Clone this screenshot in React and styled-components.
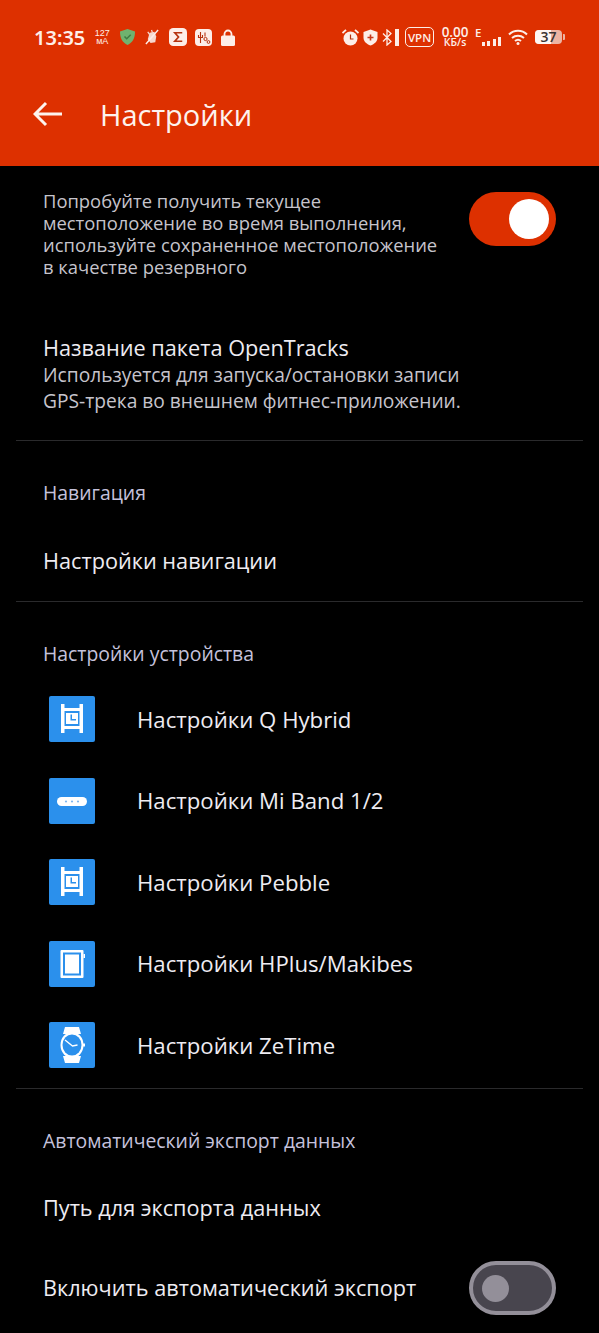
import React from 'react'
import styled, { createGlobalStyle } from 'styled-components'

const GlobalStyle = createGlobalStyle`
  html, body {
    margin: 0;
    padding: 0;
    background: #000;
    font-family: "Open Sans", "Noto Sans", sans-serif;
  }
`

const Page = styled.div`
  width: 599px;
  height: 1333px;
  overflow: hidden;
  background: #000;
`

const Header = styled.header`
  height: 166px;
  background: #dd3000;
  color: #fff;
  display: flex;
  flex-direction: column;
`

const StatusBar = styled.div`
  height: 24px;
  margin-top: 25px;
  padding: 0 34px;
  display: flex;
  align-items: center;
  justify-content: space-between;
  color: #fdeee8;
`

const StatusGroup = styled.div`
  display: flex;
  align-items: center;
`

const Clock = styled.span`
  font-size: 20px;
  font-weight: 600;
  margin-right: 10px;
  font-family: "Noto Sans", sans-serif;
`

const Current = styled.span`
  display: flex;
  flex-direction: column;
  align-items: center;
  width: 14px;
  font-size: 9px;
  line-height: 8px;
  margin-right: 10px;
  font-family: "Liberation Sans", sans-serif;
`

const Vpn = styled.span`
  box-sizing: border-box;
  border: 1.5px solid #fdeee8;
  border-radius: 5px;
  width: 29px;
  height: 20px;
  display: flex;
  align-items: center;
  justify-content: center;
  font-size: 11.5px;
  font-weight: 600;
  margin: 0 6px;
`

const Speed = styled.span`
  display: flex;
  flex-direction: column;
  align-items: center;
  width: 30px;
  font-size: 13.5px;
  line-height: 10px;
  font-weight: 600;
  small {
    font-size: 10.5px;
    line-height: 10px;
  }
`

const NetType = styled.span`
  font-size: 11.5px;
  font-weight: 600;
  line-height: 12px;
  margin: 0 0 9px 5px;
`

const Signal = styled.div`
  display: flex;
  align-items: flex-end;
  gap: 2.5px;
  height: 10px;
  margin: 8px 7px 0 0;
`

const SignalBar = styled.i`
  display: block;
  width: 3px;
  height: ${(p) => p.$h}px;
  background: #fdeee8;
`

const Battery = styled.div`
  position: relative;
  width: 27px;
  height: 14px;
  margin-left: 7px;
  border-radius: 4px;
  background: #ecb4a3;
  display: flex;
  align-items: center;
  justify-content: center;
  font-size: 14px;
  line-height: 14px;
  font-weight: 600;
  color: #3a3230;
`

const BatteryFill = styled.i`
  position: absolute;
  left: 0;
  top: 0;
  bottom: 0;
  border-radius: 4px 0 0 4px;
  background: #fdf6f3;
`

const BatteryLabel = styled.span`
  position: relative;
`

const BatteryTip = styled.i`
  display: block;
  width: 2px;
  height: 6px;
  margin-left: 1px;
  background: #ecb4a3;
  border-radius: 0 1px 1px 0;
`

const TitleRow = styled.div`
  display: flex;
  align-items: center;
  margin-top: 46px;
  height: 38px;
  padding-left: 33px;
`

const Title = styled.h1`
  margin: 0 0 0 38px;
  font-size: 29px;
  font-weight: 400;
  color: #fdf3ee;
`

const Content = styled.main`
  padding: 0 16px;
`

const Section = styled.section`
  border-bottom: ${(p) => (p.$last ? 'none' : '1px solid #2a2a2c')};
  padding-bottom: ${(p) => p.$pb || 0}px;
`

const TopRow = styled.div`
  display: flex;
  align-items: flex-start;
  justify-content: space-between;
  padding: 24px 27px 0;
`

const ToggleRow = styled.div`
  display: flex;
  align-items: center;
  justify-content: space-between;
  margin-top: 40px;
  padding: 0 27px;
`

const Hint = styled.p`
  margin: 0;
  font-size: 18.4px;
  line-height: 22px;
  color: #c6c4cc;
  width: 400px;
`

const OpenTracks = styled.div`
  padding: 0 27px;
  margin-top: 56px;
`

const RowTitle = styled.div`
  font-size: 21.7px;
  line-height: 28px;
  color: #eeecf2;
`

const SubText = styled.p`
  margin: 0;
  font-size: 19.2px;
  line-height: 26px;
  color: #c6c4cc;
`

const Caption = styled.h2`
  margin: 0;
  padding: 40px 27px 0;
  font-size: 19.4px;
  line-height: 24px;
  font-weight: 400;
  color: #c5c2dc;
`

const PlainRow = styled.div`
  height: 28px;
  margin-top: ${(p) => p.$mt}px;
  padding: 0 27px;
  display: flex;
  align-items: center;
  font-size: 21.7px;
  color: #eeecf2;
`

const DeviceList = styled.div`
  display: flex;
  flex-direction: column;
  gap: 35.6px;
  margin-top: 30px;
`

const DeviceRow = styled.div`
  display: flex;
  align-items: center;
  height: 46px;
  padding-left: 33px;
  font-size: 22.2px;
  color: #eeecf2;
`

const DeviceIcon = styled.svg`
  width: 46px;
  height: 46px;
  margin-right: 42px;
  flex: none;
`

const Switch = styled.div`
  box-sizing: border-box;
  flex: none;
  width: 87px;
  height: 54px;
  margin-top: ${(p) => (p.$on ? 2 : 0)}px;
  padding: 0 ${(p) => (p.$on ? 7 : 9)}px;
  border-radius: 27px;
  display: flex;
  align-items: center;
  justify-content: ${(p) => (p.$on ? 'flex-end' : 'flex-start')};
  background: ${(p) => (p.$on ? '#dd3000' : '#48454e')};
  border: ${(p) => (p.$on ? 'none' : '4px solid #938f99')};
`

const Knob = styled.span`
  display: block;
  border-radius: 50%;
  width: ${(p) => (p.$on ? 40 : 27)}px;
  height: ${(p) => (p.$on ? 40 : 27)}px;
  background: ${(p) => (p.$on ? '#fff' : '#938f99')};
`

const Tile = ({ children }) => (
  <DeviceIcon viewBox="0 0 46 46">
    <rect width="46" height="46" rx="2" fill="#2b90ec" />
    {children}
  </DeviceIcon>
)

const HybridGlyph = () => (
  <g fill="#fff">
    <rect x="12" y="8" width="3.500" height="29" />
    <rect x="30.500" y="8" width="3.500" height="29" />
    <rect x="12" y="12" width="22" height="3" />
    <rect x="12" y="30" width="22" height="3" />
    <rect x="17" y="17" width="12" height="11" />
    <path d="M21.500 18.500h1.500v4.500h4v1.500h-5.500z" fill="#2b90ec" />
  </g>
)

const BandGlyph = () => (
  <g>
    <rect x="8" y="19" width="30" height="9" rx="4.500" fill="#fff" />
    <circle cx="17" cy="23.500" r="1.100" fill="#7fb6ee" />
    <circle cx="23" cy="23.500" r="1.100" fill="#7fb6ee" />
    <circle cx="29" cy="23.500" r="1.100" fill="#7fb6ee" />
  </g>
)

const PlusGlyph = () => (
  <g>
    <rect x="11.500" y="9" width="23" height="28" rx="1" fill="#fff" />
    <rect x="34.500" y="13" width="1.500" height="4" fill="#fff" />
    <rect x="14" y="11.500" width="18" height="23" fill="#2b90ec" />
    <rect x="16" y="13.500" width="14" height="19" fill="#fff" />
  </g>
)

const WatchGlyph = () => (
  <g>
    <path d="M16 5h14l2 7H14z M14 34h18l-2 7H16z" fill="#fff" />
    <ellipse cx="23" cy="23" rx="11.500" ry="13" fill="#fff" />
    <rect x="34" y="21.500" width="2" height="3" fill="#fff" />
    <ellipse cx="23" cy="23" rx="9.500" ry="10.500" fill="#2b90ec" />
    <path d="M16 18l7.500 6 5-1" fill="none" stroke="#fff" strokeWidth="1.400" />
  </g>
)

const devices = [
  { name: 'Настройки Q Hybrid', glyph: <HybridGlyph /> },
  { name: 'Настройки Mi Band 1/2', glyph: <BandGlyph /> },
  { name: 'Настройки Pebble', glyph: <HybridGlyph /> },
  { name: 'Настройки HPlus/Makibes', glyph: <PlusGlyph /> },
  { name: 'Настройки ZeTime', glyph: <WatchGlyph /> },
]

const StatusIcon = styled.svg`
  display: block;
  flex: none;
  width: ${(p) => p.$w || 17}px;
  height: ${(p) => p.$h || 17}px;
  margin-right: ${(p) => p.$mr || 0}px;
`

function StatusBarLeft() {
  return (
    <StatusGroup>
      <Clock>13:35</Clock>
      <Current>
        <span>127</span>
        <span>мА</span>
      </Current>
      <StatusIcon viewBox="0 0 17 18" $h={18} $mr={8}>
        <path d="M8.500 1L16 3.500c0 7-2.500 11-7.500 13.500C3.500 14.500 1 10.500 1 3.500z" fill="#6fb36f" />
        <path d="M5.500 8.500l2.200 2.300 4-4" fill="none" stroke="#3f7d44" strokeWidth="1.500" />
      </StatusIcon>
      <StatusIcon viewBox="0 0 17 17" $w={16} $h={16} $mr={9}>
        <path d="M6 4l5-1 2 5-1 6-5 1-3-4z" fill="#f6d9cf" />
        <path d="M2 16L15 1" stroke="#fdeee8" strokeWidth="1.500" />
        <path d="M6 6l-2-3M9 4L8 1" stroke="#f6d9cf" strokeWidth="1.300" />
      </StatusIcon>
      <StatusIcon viewBox="0 0 17 17" $w={18} $h={18} $mr={8}>
        <rect width="17" height="17" rx="4" fill="#fdeee8" />
        <path d="M12.500 4.500h-7l3.500 4-3.500 4h7" fill="none" stroke="#b6330f" strokeWidth="1.600" />
      </StatusIcon>
      <StatusIcon viewBox="0 0 17 17" $mr={9}>
        <rect width="17" height="17" rx="4" fill="#fdeee8" />
        <path d="M5.500 3v11M3.500 6v2.500h4V6" fill="none" stroke="#b6330f" strokeWidth="1.100" />
        <path d="M10 3.500v4" stroke="#b6330f" strokeWidth="1.100" />
        <circle cx="10.500" cy="10" r="1.600" fill="none" stroke="#b6330f" />
        <circle cx="13.500" cy="13" r="1.400" fill="none" stroke="#b6330f" />
      </StatusIcon>
      <StatusIcon viewBox="0 0 14 17" $w={14}>
        <path d="M3.500 7V5a3.500 3.500 0 0 1 7 0v2" fill="none" stroke="#fdeee8" strokeWidth="1.800" />
        <rect y="6.500" width="14" height="10.500" rx="1.500" fill="#fdeee8" />
      </StatusIcon>
    </StatusGroup>
  )
}

function StatusBarRight() {
  return (
    <StatusGroup>
      <StatusIcon viewBox="0 0 17 17" $mr={4}>
        <circle cx="8.500" cy="9.500" r="7" fill="#fdeee8" />
        <path d="M8.500 5.500v4.500h3" fill="none" stroke="#b6330f" strokeWidth="1.200" />
        <path d="M0.500 4L4 0.800M16.500 4L13 0.800" stroke="#fdeee8" strokeWidth="1.800" />
      </StatusIcon>
      <StatusIcon viewBox="0 0 15 17" $w={15} $mr={4}>
        <path d="M7.500 0.500L14.500 3v5.500c0 4-3 6.500-7 8-4-1.500-7-4-7-8V3z" fill="#fdeee8" />
        <path d="M7.500 5.500v6M4.500 8.500h6" stroke="#c9391a" strokeWidth="1.600" />
      </StatusIcon>
      <StatusIcon viewBox="0 0 11 17" $w={11} $mr={2}>
        <path d="M1 4.500l8 8-4 3.500V1l4 3.500-8 8" fill="none" stroke="#fdeee8" strokeWidth="1.300" />
      </StatusIcon>
      <StatusIcon viewBox="0 0 4 17" $w={4}>
        <rect width="4" height="17" fill="#fdeee8" />
      </StatusIcon>
      <Vpn>VPN</Vpn>
      <Speed>
        <span>0.00</span>
        <small>КБ/s</small>
      </Speed>
      <NetType>E</NetType>
      <Signal>
        <SignalBar $h={4} />
        <SignalBar $h={5} />
        <SignalBar $h={7} />
        <SignalBar $h={9} />
      </Signal>
      <StatusIcon viewBox="0 0 20 16" $w={20} $h={16}>
        <path d="M1 5.500c5-5 13-5 18 0M4 9c3.500-3 8.500-3 12 0M7 12c1.800-1.500 4.200-1.500 6 0" fill="none" stroke="#fdeee8" strokeWidth="2" />
        <circle cx="10" cy="14.500" r="1.500" fill="#fdeee8" />
      </StatusIcon>
      <Battery>
        <BatteryFill style={{ width: `${37 * 1.6}%` }} />
        <BatteryLabel>37</BatteryLabel>
      </Battery>
      <BatteryTip />
    </StatusGroup>
  )
}

function App() {
  return (
    <Page>
      <GlobalStyle />
      <Header>
        <StatusBar>
          <StatusBarLeft />
          <StatusBarRight />
        </StatusBar>
        <TitleRow>
          <svg width="29" height="26" viewBox="0 0 29 26" fill="none" stroke="#fdf3ee" strokeWidth="3">
            <path d="M2 13h27M13 2L2 13l11 11" />
          </svg>
          <Title>Настройки</Title>
        </TitleRow>
      </Header>
      <Content>
        <Section $pb={26}>
          <TopRow>
            <Hint>
              Попробуйте получить текущее местоположение во время выполнения,
              используйте сохраненное местоположение в качестве резервного
            </Hint>
            <Switch $on>
              <Knob $on />
            </Switch>
          </TopRow>
          <OpenTracks>
            <RowTitle>Название пакета OpenTracks</RowTitle>
            <SubText>
              Используется для запуска/остановки записи
              <br />
              GPS-трека во внешнем фитнес-приложении.
            </SubText>
          </OpenTracks>
        </Section>
        <Section $pb={27}>
          <Caption>Навигация</Caption>
          <PlainRow $mt={41}>Настройки навигации</PlainRow>
        </Section>
        <Section $pb={20}>
          <Caption>Настройки устройства</Caption>
          <DeviceList>
            {devices.map((device) => (
              <DeviceRow key={device.name}>
                <Tile>{device.glyph}</Tile>
                {device.name}
              </DeviceRow>
            ))}
          </DeviceList>
        </Section>
        <Section $last>
          <Caption>Автоматический экспорт данных</Caption>
          <PlainRow $mt={40}>Путь для экспорта данных</PlainRow>
          <ToggleRow>
            <RowTitle>Включить автоматический экспорт</RowTitle>
            <Switch>
              <Knob />
            </Switch>
          </ToggleRow>
        </Section>
      </Content>
    </Page>
  )
}

export default App
